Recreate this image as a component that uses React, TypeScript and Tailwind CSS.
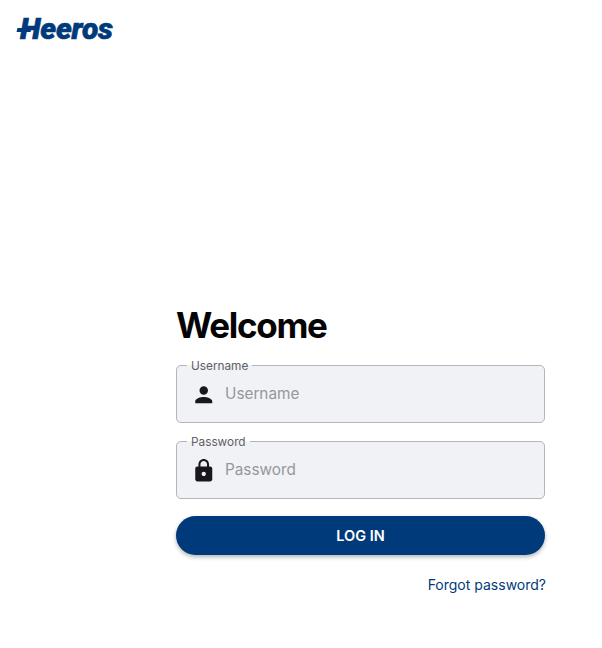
import { MdLock, MdPerson } from "react-icons/md";

function Field({ label, icon }: { label: string; icon: React.ReactNode }) {
  return (
    <fieldset className="h-[64px] rounded-[5px] border border-[#b4b5ba] bg-[#f1f2f6] pl-[10px] pr-3">
      <legend className="translate-y-px px-[4px] text-[11.8px] leading-[12px] text-[#5f6066]">{label}</legend>
      <div className="flex h-[47px] items-center">
        <span className="mr-[5px] flex w-[33px] justify-center text-[#17171c]">{icon}</span>
        <input
          placeholder={label}
          className="min-w-0 flex-1 bg-transparent text-[15.3px] outline-none placeholder:text-[#96979c]"
        />
      </div>
    </fieldset>
  );
}

export default function App() {
  return (
    <div className="h-[648px] w-[602px] overflow-hidden bg-white font-['Inter',sans-serif]">
      <header className="pl-[17px] pt-[11px]">
        {/* logo: real text plus the bar through the H */}
        <div className="relative h-[36px] w-[100px] pl-[3px] font-['Roboto',sans-serif] text-[30px] font-black italic leading-[36px] tracking-[-0.2px] text-[#003a7a] [-webkit-text-stroke:0.6px_#003a7a]">
          Heeros
          <span className="absolute left-0 top-[17px] h-[4px] w-[14px] -skew-x-12 bg-[#003a7a]" />
        </div>
      </header>

      <main className="ml-[176px] mt-[257px] w-[369px]">
        <h1 className="text-[35px] font-bold leading-[42px] tracking-[-1.3px] text-[#050505]">Welcome</h1>

        <div className="mt-[13px] flex flex-col gap-[12px]">
          <Field label="Username" icon={<MdPerson size={25.5} />} />
          <Field label="Password" icon={<MdLock size={25.5} />} />
        </div>

        <button className="mt-[17px] h-[39px] w-full rounded-full bg-[#003a7a] text-[14.5px] font-semibold text-white shadow-[0_2px_4px_rgba(0,0,0,0.3)]">
          LOG IN
        </button>

        <div className="-mr-px mt-[17px] text-right">
          <a className="text-[14px] leading-[20px] text-[#003a7a]">Forgot password?</a>
        </div>
      </main>
    </div>
  );
}
